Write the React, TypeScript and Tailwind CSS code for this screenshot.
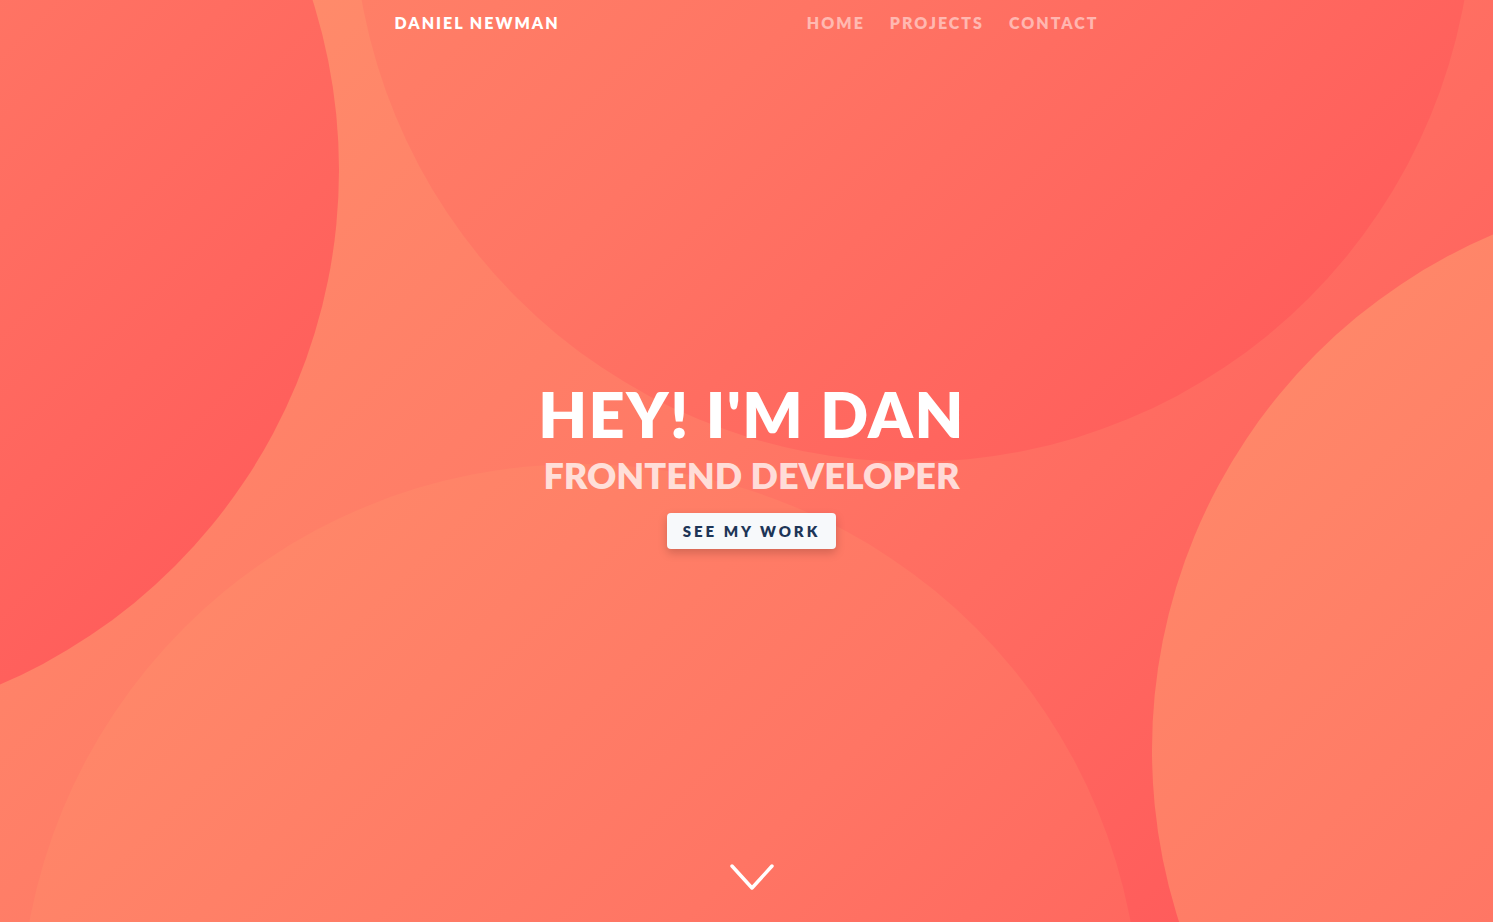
import React from 'react';

const circles = [
  { key: 'left', className: 'left-[-781px] top-[-390px]' },
  { key: 'top', className: 'left-[353px] top-[-658px]' },
  { key: 'bottom', className: 'left-[20px] top-[464px]' },
  { key: 'right', className: 'left-[1152px] top-[190px]' },
];

export default function App() {
  return (
    <div
      className="relative h-[922px] w-full overflow-hidden bg-[linear-gradient(135deg,#ff916c_0%,#ff7a66_45%,#ff5358_100%)]"
      style={{ fontFamily: 'Lato, "Open Sans", sans-serif' }}
    >
      {circles.map((c) => (
        <div
          key={c.key}
          className={`absolute h-[1120px] w-[1120px] rounded-full bg-[linear-gradient(135deg,#ff8e6b_0%,#ff7564_50%,#ff5558_100%)] ${c.className}`}
        />
      ))}

      <div className="relative flex h-full flex-col">
        <header className="mx-auto flex w-[704px] items-center justify-between pt-[11px]">
          <a className="text-[16px] font-extrabold tracking-[2px] text-white">DANIEL NEWMAN</a>
          <nav className="flex gap-[25px] text-[16px] font-extrabold tracking-[2px] text-white/50">
            <a>HOME</a>
            <a>PROJECTS</a>
            <a>CONTACT</a>
          </nav>
        </header>

        <main className="flex flex-1 flex-col items-center justify-center pl-[10px] pt-[34px] text-center">
          <h1 className="text-[63px] font-extrabold leading-none tracking-[1.5px] text-white">HEY! I'M DAN</h1>
          <h2 className="mt-[12px] text-[36px] font-extrabold leading-none text-white/75">FRONTEND DEVELOPER</h2>
          <button className="mt-[20px] rounded-[4px] bg-[#f7f9fb] px-[16px] py-[7px] text-[15px] font-extrabold tracking-[3px] text-[#1d3557] shadow-[0_4px_10px_rgba(0,0,0,0.18)]">
            SEE MY WORK
          </button>
        </main>

        <div className="flex justify-center pb-[30px] pl-[10px]">
          <svg width="46" height="30" viewBox="0 0 46 30" fill="none">
            <path d="M3 4 L23 26 L43 4" stroke="white" strokeWidth="3.5" strokeLinecap="round" strokeLinejoin="round" />
          </svg>
        </div>
      </div>
    </div>
  );
}
